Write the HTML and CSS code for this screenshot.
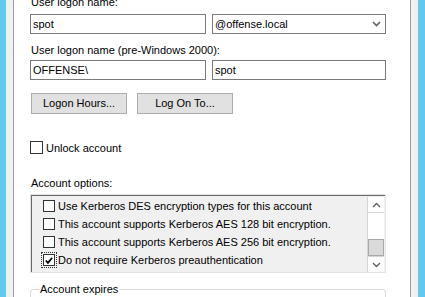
FILE: index.html
```html
<!DOCTYPE html>
<html lang="en">

<head>
  <meta charset="UTF-8">
  <title>spot Properties - Account</title>
  <link rel="stylesheet" href="styles.css">
</head>

<body>
  <div class="frame">
    <div class="edge edge-left"></div>

    <div class="dialog">
      <div class="label first">User logon name:</div>
      <div class="row">
        <div class="textbox wide">spot</div>
        <div class="combo">
          <span>@offense.local</span>
          <svg class="chevron" width="9" height="6" viewBox="0 0 9 6">
            <path d="M1 1 L4.5 4.5 L8 1" fill="none" stroke="#606060" stroke-width="1.6"/>
          </svg>
        </div>
      </div>

      <div class="label">User logon name (pre-Windows 2000):</div>
      <div class="row">
        <div class="textbox wide">OFFENSE\</div>
        <div class="textbox narrow">spot</div>
      </div>

      <div class="buttons">
        <div class="button">Logon Hours...</div>
        <div class="button">Log On To...</div>
      </div>

      <div class="check unlock">
        <span class="box"></span>
        <span>Unlock account</span>
      </div>

      <div class="label options">Account options:</div>
      <div class="listbox">
        <div class="items">
          <div class="item"><span class="box"></span>Use Kerberos DES encryption types for this account</div>
          <div class="item"><span class="box"></span>This account supports Kerberos AES 128 bit encryption.</div>
          <div class="item"><span class="box"></span>This account supports Kerberos AES 256 bit encryption.</div>
          <div class="item"><span class="box checked focused">
            <svg width="11" height="11" viewBox="0 0 11 11">
              <path d="M2 5.5 L4.3 8 L9 2.5" fill="none" stroke="#000" stroke-width="2"/>
            </svg>
          </span>Do not require Kerberos preauthentication</div>
        </div>
        <div class="scrollbar">
          <div class="arrow">
            <svg width="9" height="6" viewBox="0 0 9 6">
              <path d="M1 5 L4.5 1.5 L8 5" fill="none" stroke="#606060" stroke-width="1.4"/>
            </svg>
          </div>
          <div class="track"></div>
          <div class="thumb"></div>
          <div class="arrow down">
            <svg width="9" height="6" viewBox="0 0 9 6">
              <path d="M1 1 L4.5 4.5 L8 1" fill="none" stroke="#606060" stroke-width="1.4"/>
            </svg>
          </div>
        </div>
      </div>

      <fieldset class="group">
        <legend>Account expires</legend>
      </fieldset>
    </div>

    <div class="edge edge-right"></div>
  </div>
</body>

</html>
```

FILE: styles.css
```css
* {
  margin: 0;
  padding: 0;
  box-sizing: border-box;
}

body {
  font-family: "Liberation Sans", Arial, sans-serif;
  font-size: 11px;
  color: #000;
  background: #fff;
  overflow: hidden;
}

.frame {
  display: flex;
  height: 297px;
  overflow: hidden;
}

.edge {
  background: #f0f0f0;
}

.edge-left {
  width: 14px;
  border-left: 6px solid #5fcbec;
  border-right: 1px solid #a0a0a0;
}

.edge-right {
  width: 15px;
  border-left: 1px solid #a0a0a0;
  border-right: 7px solid #5fcbec;
}

.dialog {
  flex: 1;
  padding: 0 24px 0 16px;
  margin-top: -4px;
}

.label {
  height: 13px;
  line-height: 13px;
  padding-left: 1px;
  margin-top: 10px;
  margin-bottom: 3px;
}

.label.first {
  margin-top: 0;
  margin-bottom: 5px;
}

.row {
  display: flex;
  gap: 6px;
}

.textbox,
.combo {
  height: 20px;
  border: 1px solid #7a7a7a;
  background: #fff;
  line-height: 18px;
  padding-left: 2px;
}

.textbox.wide {
  width: 176px;
}

.textbox.narrow,
.combo {
  flex: 1;
}

.combo {
  display: flex;
  justify-content: space-between;
  align-items: center;
  padding-right: 4px;
}

.buttons {
  display: flex;
  gap: 10px;
  margin-top: 13px;
  padding-left: 1px;
}

.button {
  width: 96px;
  height: 21px;
  line-height: 19px;
  text-align: center;
  background: #e1e1e1;
  border: 1px solid #adadad;
}

.check {
  display: flex;
  align-items: center;
  gap: 3px;
}

.unlock {
  margin-top: 27px;
  height: 13px;
}

.box {
  width: 13px;
  height: 13px;
  border: 1px solid #333;
  background: #fff;
  display: inline-flex;
  align-items: center;
  justify-content: center;
  flex-shrink: 0;
}

.label.options {
  margin-top: 23px;
  margin-bottom: 4px;
}

.listbox {
  display: flex;
  height: 79px;
  background: #f0f0f0;
  border-top: 1px solid #a0a0a0;
  border-left: 1px solid #a0a0a0;
  border-right: 1px solid #fff;
  border-bottom: 1px solid #fff;
  box-shadow: inset 1px 1px 0 #696969;
  outline: 1px solid #e3e3e3;
  outline-offset: -1px;
}

.items {
  flex: 1;
  padding: 2px 0 0 12px;
}

.item {
  display: flex;
  align-items: center;
  gap: 3px;
  height: 18px;
}

.item .box {
  width: 12px;
  height: 12px;
}

.focused {
  outline: 1px dotted #333;
  outline-offset: 1px;
}

.scrollbar {
  width: 17px;
  margin: 2px 1px 0 0;
  display: flex;
  flex-direction: column;
  background: #fff;
  border-left: 1px solid #d4d4d4;
}

.arrow {
  height: 16px;
  display: flex;
  align-items: center;
  justify-content: center;
  border-bottom: 1px solid #d4d4d4;
}

.arrow.down {
  border-bottom: 0;
  border-top: 1px solid #d4d4d4;
}

.track {
  flex: 1;
}

.thumb {
  height: 17px;
  background: #dadada;
  border: 1px solid #a8a8a8;
}

.group {
  margin-top: 10px;
  height: 40px;
  border: 1px solid #dcdcdc;
  border-radius: 3px;
  padding: 0 8px;
}

.group legend {
  padding: 0 1px;
  line-height: 13px;
}
```
